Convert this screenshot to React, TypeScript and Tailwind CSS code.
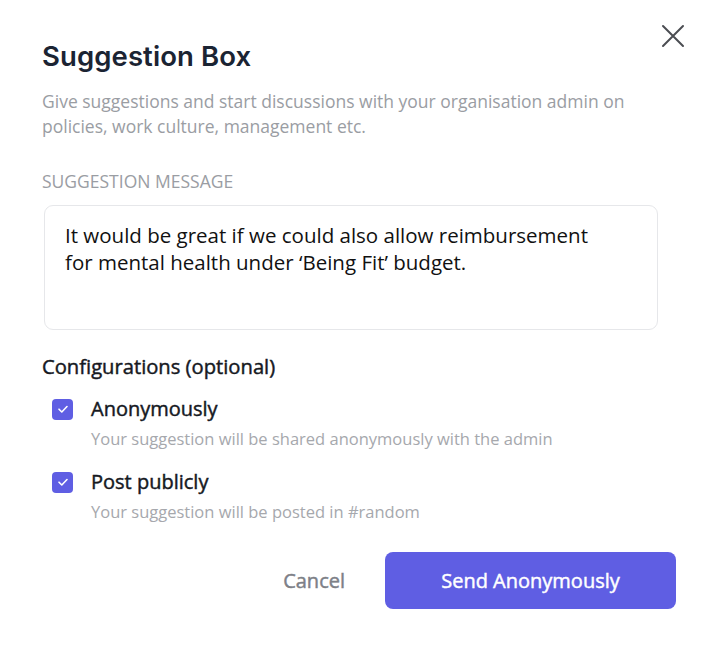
import React from "react";

function Check() {
  return (
    <div className="w-[21px] h-[21px] rounded-[4px] bg-[#5f5ee3] flex items-center justify-center shrink-0">
      <svg width="12" height="10" viewBox="0 0 12 10" fill="none">
        <path d="M2 5.2 L4.8 8 L10 2.5" stroke="white" strokeWidth="1.6" strokeLinecap="round" strokeLinejoin="round" />
      </svg>
    </div>
  );
}

export default function App() {
  return (
    <div className="relative w-[703px] h-[652px] bg-white pl-[42px] pr-[27px] pt-[40px] flex flex-col" style={{ fontFamily: '"Open Sans", sans-serif' }}>
      <button className="absolute left-[661px] top-[24px] w-[24px] h-[24px] flex items-center justify-center">
        <svg width="24" height="24" viewBox="0 0 24 24" fill="none">
          <path d="M2 2 L22 22 M22 2 L2 22" stroke="#4b4d52" strokeWidth="2" strokeLinecap="round" />
        </svg>
      </button>
      <h1 className="text-[27.5px] leading-[32px] font-semibold text-[#1b2433] tracking-[0.1px]" style={{ fontFamily: "Inter, sans-serif" }}>
        Suggestion Box
      </h1>
      <p className="mt-[17px] text-[17.5px] leading-[25px] text-[#9a9da3] w-[620px]">
        Give suggestions and start discussions with your organisation admin on
        <br />
        policies, work culture, management etc.
      </p>
      <div className="mt-[30px] text-[17.5px] leading-[24px] text-[#9a9da3] uppercase">Suggestion Message</div>
      <div className="mt-[12px] ml-[2px] w-[614px] h-[125px] rounded-[9px] border border-[#e6e7ea] pl-[20px] pt-[16px] text-[20.5px] leading-[27px] text-[#111111]">
        It would be great if we could also allow reimbursement
        <br />
        for mental health under ‘Being Fit’ budget.
      </div>
      <div className="mt-[23px] text-[20.2px] leading-[26px] font-medium text-[#16191f] [-webkit-text-stroke:0.45px_#16191f]">Configurations (optional)</div>
      <div className="mt-[17px] pl-[10px] flex flex-col">
        <div className="flex items-center gap-[18px]">
          <Check />
          <span className="text-[20px] leading-[26px] font-medium text-[#16191f] [-webkit-text-stroke:0.45px_#16191f]">Anonymously</span>
        </div>
        <div className="mt-[6px] pl-[39px] text-[16.5px] leading-[22px] text-[#a6a8ad]">Your suggestion will be shared anonymously with the admin</div>
        <div className="mt-[19px] flex items-center gap-[18px]">
          <Check />
          <span className="text-[20px] leading-[26px] font-medium text-[#16191f] [-webkit-text-stroke:0.45px_#16191f]">Post publicly</span>
        </div>
        <div className="mt-[6px] pl-[39px] text-[16.5px] leading-[22px] text-[#a6a8ad]">Your suggestion will be posted in #random</div>
      </div>
      <div className="mt-[29px] flex items-center justify-end gap-[40px]">
        <button className="text-[20px] font-medium text-[#7d8087] [-webkit-text-stroke:0.45px_#7d8087]">Cancel</button>
        <button className="w-[291px] h-[57px] rounded-[8px] bg-[#5f5ee3] text-white text-[20px] font-medium [-webkit-text-stroke:0.45px_#ffffff]">Send Anonymously</button>
      </div>
    </div>
  );
}
